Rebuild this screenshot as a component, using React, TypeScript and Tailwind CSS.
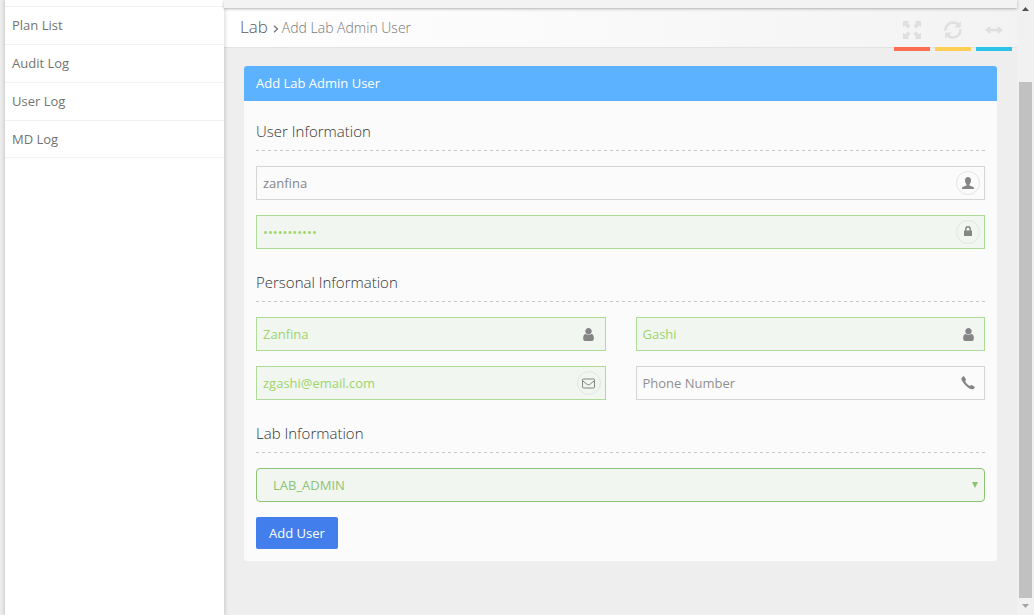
import type { ReactNode } from "react";

const links = ["Plan List", "Audit Log", "User Log", "MD Log"];

function UserIcon() {
  return (
    <svg viewBox="0 0 1792 1792" className="size-[15px]" fill="currentColor">
      <path d="M1536 1399q0 109-62.500 187t-150.500 78h-854q-88 0-150.500-78t-62.500-187q0-85 8.500-160.500t31.500-152 58.500-131 94-89 134.500-34.500q131 128 313 128t313-128q76 0 134.500 34.500t94 89 58.500 131 31.500 152 8.500 160.500zm-256-887q0 159-112.500 271.500t-271.500 112.500-271.500-112.500-112.500-271.500 112.500-271.500 271.500-112.500 271.500 112.500 112.500 271.500z" />
    </svg>
  );
}

function BustIcon() {
  return (
    <svg viewBox="0 0 12 12" className="size-3" fill="currentColor">
      <path d="M6 0C4 0 3 1.300 3 3.200c0 1.800.6 3 1.500 3.900v1.100C4.200 9 .4 9.300 0 11v1h12v-1C11.600 9.300 7.800 9 7.500 8.200V7.100C8.400 6.200 9 5 9 3.200 9 1.300 8 0 6 0z" />
    </svg>
  );
}

function LockIcon() {
  return (
    <svg viewBox="0 0 8 10" className="mb-0.5 h-[10px] w-2">
      <rect y="4.500" width="8" height="5.500" rx="0.600" fill="currentColor" />
      <path d="M1.800 5V3a2.200 2.200 0 0 1 4.400 0v2" fill="none" stroke="currentColor" strokeWidth="1.400" />
    </svg>
  );
}

function EnvelopeIcon() {
  return (
    <svg viewBox="0 0 13 11" className="h-[11px] w-[13px]" fill="none" stroke="currentColor">
      <rect x="0.5" y="1" width="12" height="9" rx="1" />
      <path d="M.7 2.800 5.200 6.400q1.300.9 2.600 0l4.500-3.600" />
    </svg>
  );
}

function PhoneIcon() {
  return (
    <svg viewBox="0 0 14 14" className="size-3.5" fill="currentColor">
      <path d="M1.200 1.200C1.900.3 2.800 0 3.200.5l1.700 2.700c.3.500.1.900-.8 1.700C4.600 7 7 9.400 9.100 9.900c.8-.9 1.200-1.100 1.700-.8l2.700 1.700c.5.400.2 1.300-.7 2-1.400 1.100-3.600.6-6.500-1.700C4.700 9.800 2.300 7.200 1 4.800.2 3.300.2 2.200 1.200 1.200z" />
    </svg>
  );
}

function ExpandIcon() {
  return (
    <svg viewBox="0 0 18 18" className="size-[18px]" fill="currentColor">
      <path d="M0 0h6.500L4.600 1.900 7.600 4.900 4.900 7.600 1.900 4.600 0 6.500zM11.500 0H18v6.500l-1.900-1.900-3 3-2.700-2.700 3-3zM0 11.500l1.900 1.900 3-3 2.700 2.700-3 3L6.500 18H0zM18 11.500V18h-6.500l1.900-1.900-3-3 2.700-2.700 3 3z" />
    </svg>
  );
}

function RefreshIcon() {
  return (
    <svg viewBox="0 0 18 18" className="size-[18px]">
      <g fill="none" stroke="currentColor" strokeWidth="2.600">
        <path d="M1.500 9.800C1.200 4.500 5.200 1.400 9.200 1.500c2.200 0 4.200 1 5.500 2.800" />
        <path d="M16.500 8.200c.3 5.300-3.700 8.400-7.700 8.300-2.200 0-4.200-1-5.500-2.800" />
      </g>
      <path d="M16.800 0v6.500h-6.500zM1.200 18v-6.500h6.500z" fill="currentColor" />
    </svg>
  );
}

function ResizeIcon() {
  return (
    <svg viewBox="0 0 18 8" className="h-2 w-[18px]" fill="currentColor">
      <path d="M0 4 4.300.4h1.200v2.300h7V.4h1.200L18 4l-4.300 3.600h-1.200V5.300h-7v2.300H4.300z" />
    </svg>
  );
}

function Tool({ bar, children }: { bar: string; children: ReactNode }) {
  return (
    <div className={`flex h-[43px] w-9 items-center justify-center border-b-4 pt-[4px] text-[#dfdfdf] ${bar}`}>
      {children}
    </div>
  );
}

function Heading({ children }: { children: ReactNode }) {
  return (
    <div>
      <h2 className="h-[30px] text-[15px] leading-[22px] font-light text-[#333]">{children}</h2>
      <svg className="block h-px w-full">
        <line x1="0" y1="0.5" x2="100%" y2="0.5" stroke="#c6c6c6" strokeDasharray="3 3" />
      </svg>
    </div>
  );
}

type FieldProps = {
  value?: string;
  placeholder?: string;
  type?: string;
  valid?: boolean;
  ring?: boolean;
  icon: ReactNode;
};

function Field({ value, placeholder, type = "text", valid, ring, icon }: FieldProps) {
  return (
    <div
      className={`flex h-[34px] min-w-0 items-center border pr-1 pl-1.5 ${
        valid ? "border-[#afdb99] bg-[#f1f6f1] text-[#a0d468]" : "border-[#d5d5d5] bg-[#fbfbfb] text-[#858585]"
      }`}
    >
      <input
        type={type}
        defaultValue={value}
        placeholder={placeholder}
        className="h-full min-w-0 flex-1 bg-transparent text-[13px] outline-none placeholder:text-[#909090]"
      />
      <span
        className={`flex size-6 shrink-0 items-center justify-center rounded-full border text-[#858585] ${
          ring ? "border-[#e3e6e2]" : "border-transparent"
        }`}
      >
        {icon}
      </span>
    </div>
  );
}

export default function App() {
  return (
    <div className="flex h-[615px] w-[1034px] overflow-hidden bg-[#eee] pl-[5px] font-['Open_Sans','Noto_Sans',sans-serif] text-[13px] text-[#737373]">
      <aside className="z-10 w-[219px] shrink-0 bg-white pt-1.5 shadow-[0_0_4px_1px_rgba(0,0,0,0.16)]">
        <nav className="flex flex-col border-t border-[#f2f2f2]">
          {links.map((label) => (
            <a
              key={label}
              className="flex h-[38px] items-center border-b border-[#f2f2f2] pl-[7px] last:h-[37px] last:pt-px"
            >
              {label}
            </a>
          ))}
        </nav>
      </aside>

      <div className="flex w-[793px] shrink-0 flex-col">
        <div className="z-20 h-2 shrink-0 bg-[#f3f3f3] shadow-[0_1px_3px_rgba(0,0,0,0.3)]" />
        <header className="flex h-10 shrink-0 justify-between border-b border-[#e3e3e3] bg-linear-to-r from-white to-[#f3f3f3] pr-[5px] pl-4">
          <div className="flex h-[38px] items-center font-light">
            <span className="text-[17px] text-[#5a5a5a]">Lab</span>
            <svg viewBox="0 0 6 8" className="mt-[3px] mr-[3px] ml-[5px] h-2 w-1.5" fill="none" stroke="#777" strokeWidth="1.300">
              <path d="m1 .8 3.500 3.200L1 7.200" />
            </svg>
            <span className="text-[14px] text-[#777]">Add Lab Admin User</span>
          </div>
          <div className="z-10 flex gap-[5px]">
            <Tool bar="border-[#fb6e52]"><ExpandIcon /></Tool>
            <Tool bar="border-[#ffce55]"><RefreshIcon /></Tool>
            <Tool bar="border-[#2dc3e8]"><ResizeIcon /></Tool>
          </div>
        </header>

        <main className="pt-[18px] pr-5 pl-5">
          <section className="flex h-[495px] flex-col overflow-hidden rounded-[3px] bg-[#fbfbfb]">
            <h1 className="flex h-[35px] shrink-0 items-center bg-[#5db2ff] pl-3 text-[13px] text-white">
              Add Lab Admin User
            </h1>
            <form className="flex flex-col px-3 pt-[19px]">
              <Heading>User Information</Heading>
              <div className="mt-[15px] mb-[22px] flex flex-col gap-[15px]">
                <Field value="zanfina" ring icon={<BustIcon />} />
                <Field type="password" value="passwordabc" valid ring icon={<LockIcon />} />
              </div>
              <Heading>Personal Information</Heading>
              <div className="mt-[15px] mb-[22px] grid grid-cols-2 gap-x-[30px] gap-y-[15px]">
                <Field value="Zanfina" valid icon={<UserIcon />} />
                <Field value="Gashi" valid icon={<UserIcon />} />
                <Field value="zgashi@email.com" valid ring icon={<EnvelopeIcon />} />
                <Field placeholder="Phone Number" icon={<PhoneIcon />} />
              </div>
              <Heading>Lab Information</Heading>
              <button
                type="button"
                className="mt-[15px] flex h-[34px] items-center justify-between rounded border border-[#8cc474] bg-[#f1f6f1] pt-px pr-[6px] pl-4 text-[#8cc474]"
              >
                LAB_ADMIN
                <svg viewBox="0 0 6 6" className="mb-0.5 size-1.5" fill="currentColor">
                  <path d="M0 0h6L3 6z" />
                </svg>
              </button>
              <button
                type="button"
                className="mt-[15px] h-8 w-[82px] rounded-xs bg-[#427fed] pt-px text-[13px] text-white"
              >
                Add User
              </button>
            </form>
          </section>
        </main>
      </div>

      <div className="flex w-[17px] shrink-0 flex-col items-center bg-[#f1f1f1]">
        <svg viewBox="0 0 7 4" className="mt-[7px] h-1 w-[7px]" fill="#505050">
          <path d="M3.500 0 7 4H0z" />
        </svg>
        <div className="mt-[71px] h-[516px] w-[13px] bg-[#c1c1c1]" />
        <svg viewBox="0 0 7 4" className="mt-1.5 h-1 w-[7px]" fill="#a3a3a3">
          <path d="M0 0h7L3.500 4z" />
        </svg>
      </div>
    </div>
  );
}
